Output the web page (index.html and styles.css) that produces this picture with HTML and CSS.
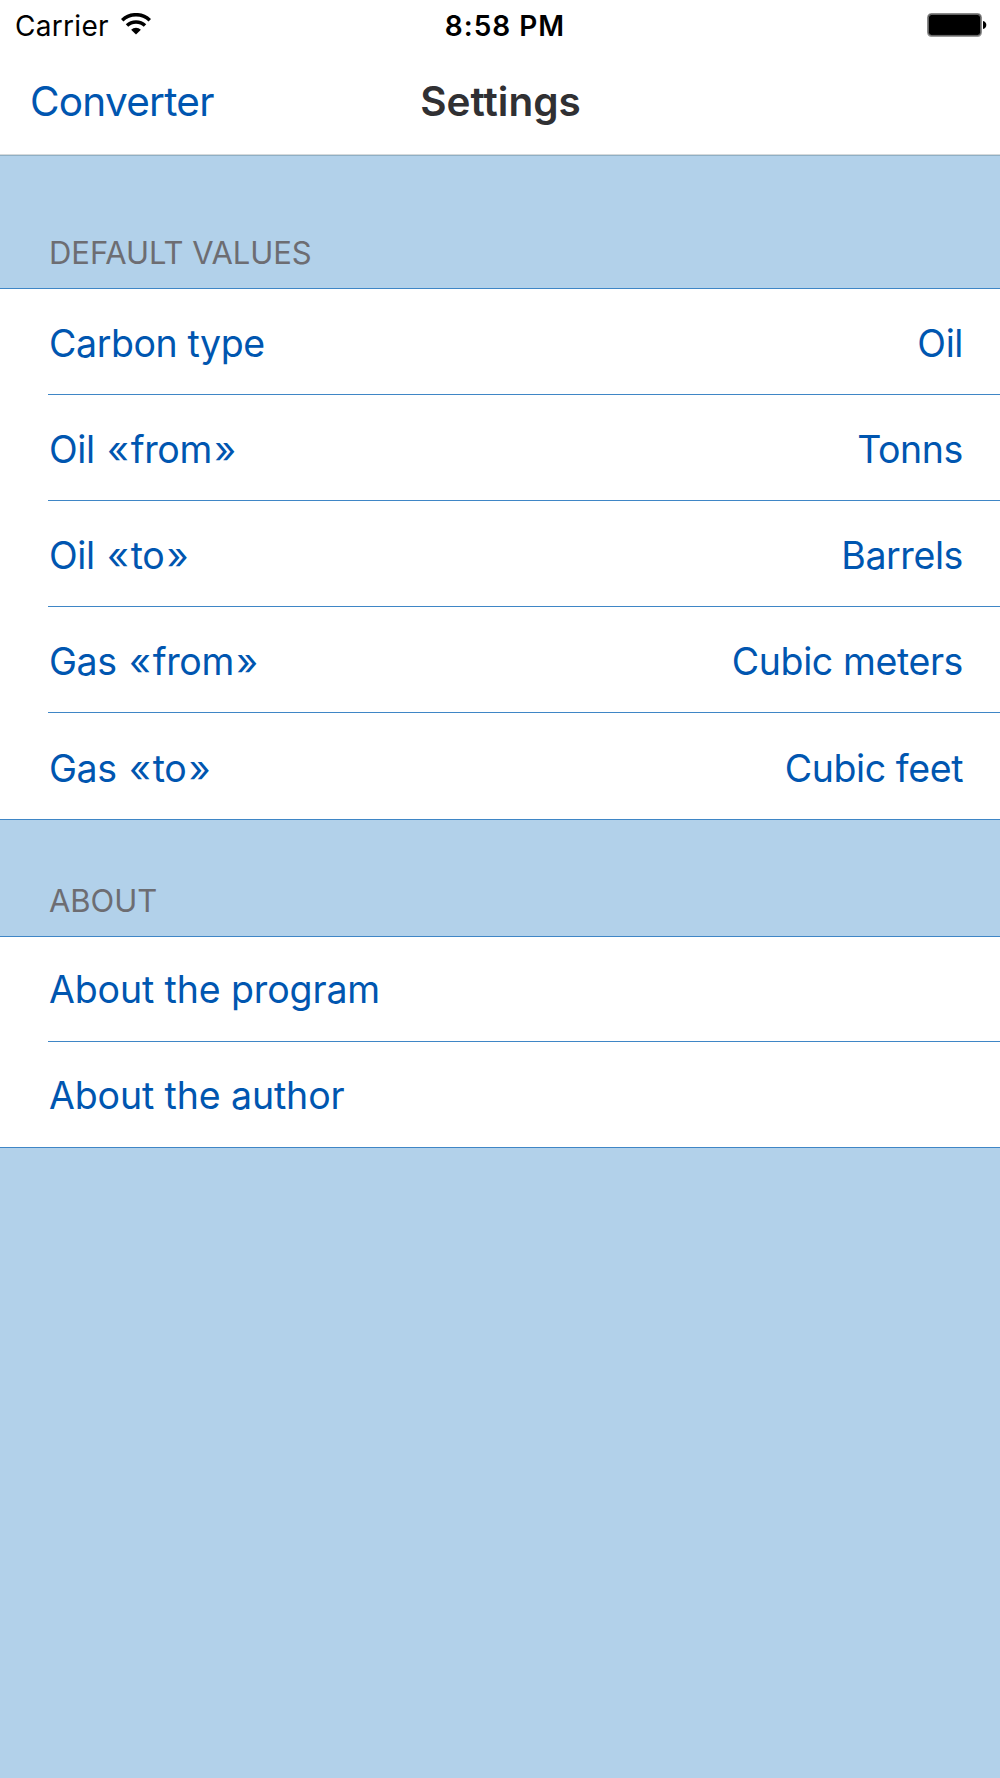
FILE: index.html
```html
<!DOCTYPE html>
<html lang="en">
<head>
<meta charset="utf-8">
<title>Settings</title>
<link rel="stylesheet" href="styles.css">
</head>
<body>
<header class="top">
  <div class="status">
    <div class="carrier"><span>Carrier</span>
      <svg class="wifi" viewBox="0 0 30 22" width="30" height="22"><g fill="none" stroke="#000" stroke-width="3.5"><path d="M1.2 7.2a20 20 0 0 1 27.6 0"/><path d="M6 12.6a13 13 0 0 1 18 0"/></g><path d="M15 21.6l-4.9-4.9a7 7 0 0 1 9.8 0z"/></svg>
    </div>
    <time class="time">8:58 PM</time>
    <svg class="battery" viewBox="0 0 60 24" width="60" height="24"><rect x="1" y="1" width="53" height="22" rx="3.5" fill="#000" stroke="#999" stroke-width="2"/><rect x="1.3" y="1.3" width="52.4" height="21" rx="3.2" fill="none" stroke="#444" stroke-width=".8"/><path d="M56 8q3.3.8 3.3 4T56 16z"/></svg>
  </div>
  <nav class="nav"><a class="back">Converter</a><h1 class="title">Settings</h1></nav>
</header>
<main>
  <h2 class="heading first">DEFAULT VALUES</h2>
  <ul class="list defaults">
    <li class="row"><span>Carbon type</span><span>Oil</span></li>
    <li class="row"><span>Oil <span class="quote">«</span>from<span class="quote">»</span></span><span>Tonns</span></li>
    <li class="row"><span>Oil <span class="quote">«</span>to<span class="quote">»</span></span><span>Barrels</span></li>
    <li class="row"><span>Gas <span class="quote">«</span>from<span class="quote">»</span></span><span>Cubic meters</span></li>
    <li class="row"><span>Gas <span class="quote">«</span>to<span class="quote">»</span></span><span>Cubic feet</span></li>
  </ul>
  <h2 class="heading">ABOUT</h2>
  <ul class="list about">
    <li class="row"><span>About the program</span></li>
    <li class="row"><span>About the author</span></li>
  </ul>
</main>
</body>
</html>
```
FILE: styles.css
```css
* { box-sizing: border-box; margin: 0; padding: 0; }
body { min-height: 1778px; background: #b2d1ea; font-family: Inter, "Liberation Sans", sans-serif; color: #0056b0; }
.top { height: 156px; background: #fff; border-bottom: 1px solid #8fafc4; box-shadow: inset 0 -1px #d5d9db; }
.status { display: grid; grid-template-columns: 1fr auto 1fr; align-items: center; height: 50px; padding: 0 13px 0 15px; color: #000; font-size: 28px; }
.carrier { display: flex; align-items: center; gap: 12px; letter-spacing: .3px; }
.carrier span { padding-top: 1px; }
.wifi { margin-top: -2px; }
.time { padding: 1px 0 0 8px; font-weight: 600; letter-spacing: 1px; }
.battery { justify-self: end; margin-top: -1px; }
.nav { display: grid; grid-template-columns: 1fr auto 1fr; align-items: center; height: 102px; padding: 0 30px; font-size: 40.5px; }
.back { letter-spacing: -.75px; }
.title { padding-left: 1px; font-size: 40.5px; font-weight: 600; color: #303033; }
.heading { display: flex; align-items: flex-end; height: 116px; padding: 0 49px 17px; font-size: 31px; font-weight: 400; letter-spacing: -.05px; color: #6d6d72; }
.first { height: 132px; }
.list { list-style: none; background: #fff; border: solid #3f86c6; border-width: 1px 0; }
.row { display: flex; justify-content: space-between; align-items: center; height: 106px; margin-left: 48px; padding: 3px 37px 0 1px; font-size: 37.5px; letter-spacing: -.4px; }
.row:first-child { height: 105px; }
.row:last-child { height: 107px; }
.row + .row { padding-top: 4px; border-top: 1px solid #3f86c6; }
.quote { display: inline-block; width: 26px; text-align: center; }
.about .row, .about .row + .row { padding-top: 1px; letter-spacing: -.12px; }
.about .row:first-child { height: 104px; }
.about .row:last-child { height: 106px; }
```
